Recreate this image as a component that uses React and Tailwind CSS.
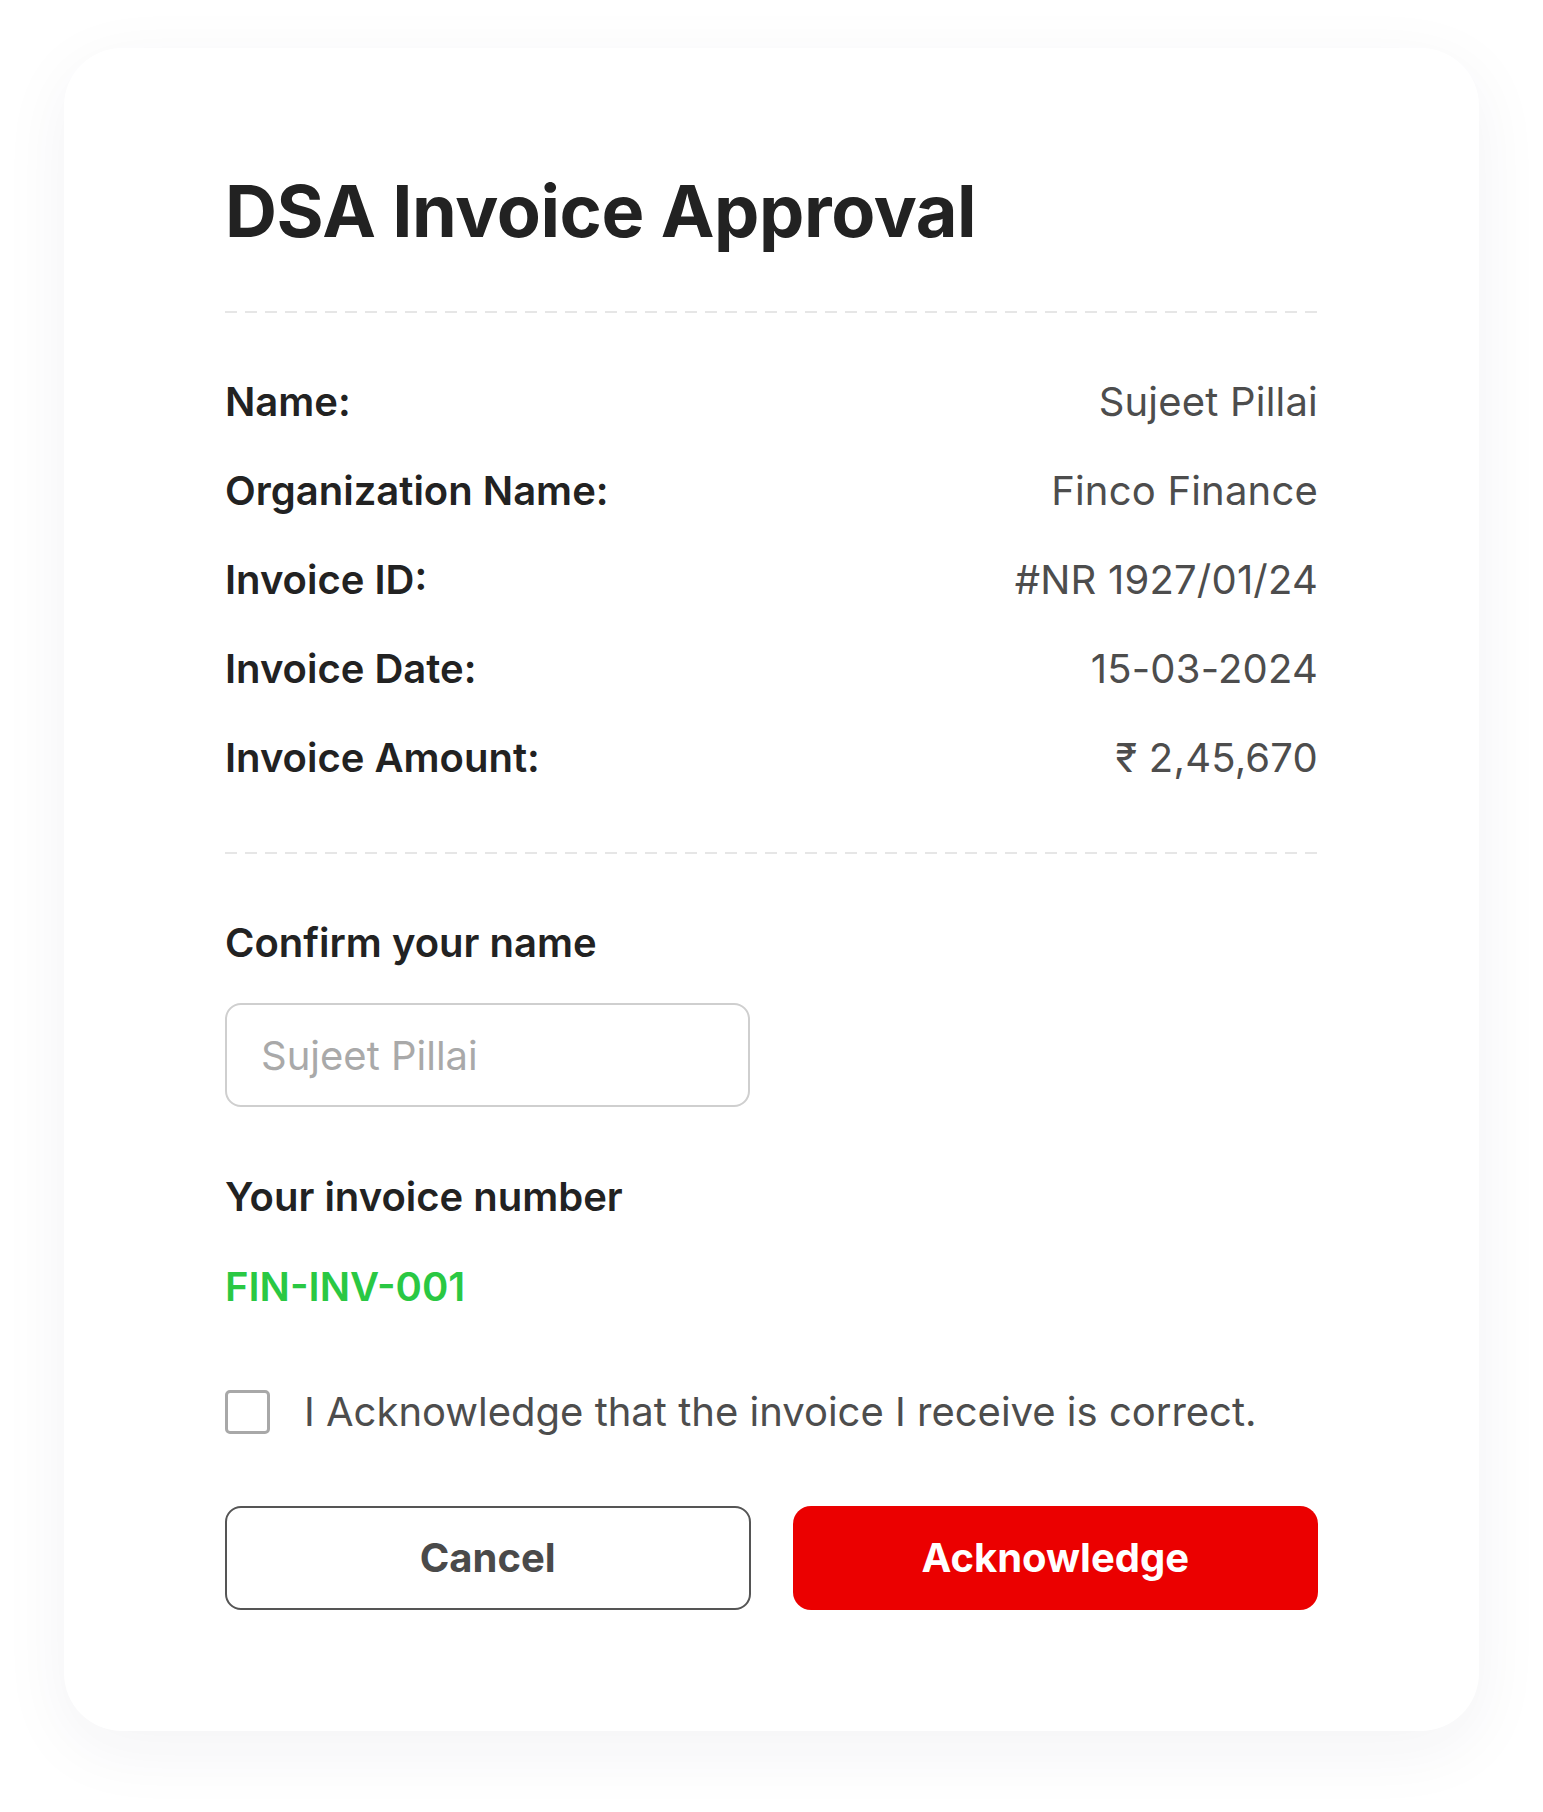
import React from "react";

const rows = [
  ["Name:", "Sujeet Pillai"],
  ["Organization Name:", "Finco Finance"],
  ["Invoice ID:", "#NR 1927/01/24"],
  ["Invoice Date:", "15-03-2024"],
  ["Invoice Amount:", "₹ 2,45,670"],
];

function Dashed({ className = "" }) {
  return (
    <div
      className={
        "h-[2px] w-full bg-[repeating-linear-gradient(to_right,#e6e6e6_0px,#e6e6e6_12px,transparent_12px,transparent_20px)] " +
        className
      }
    />
  );
}

export default function App() {
  return (
    <div className="bg-white px-[64px] pt-[48px] pb-[81px] font-['Inter','Noto_Sans',sans-serif]">
      <div className="rounded-[58px] bg-white px-[161px] pt-[120px] pb-[121px] shadow-[0_18px_70px_rgba(30,30,80,0.055)]">
        <h1 className="text-[72px] leading-[86px] font-bold text-[#222222] tracking-[-0.4px]">
          DSA Invoice Approval
        </h1>
        <Dashed className="mt-[57px]" />
        <div className="mt-[65px] flex flex-col gap-[41px]">
          {rows.map(([k, v]) => (
            <div key={k} className="flex items-center justify-between text-[40px] leading-[48px]">
              <span className="font-semibold text-[#222222]">{k}</span>
              <span className="text-[#4d4d4d] tracking-[0.2px]">{v}</span>
            </div>
          ))}
        </div>
        <Dashed className="mt-[70px]" />
        <div className="mt-[65px] text-[40px] leading-[48px] font-semibold text-[#222222]">
          Confirm your name
        </div>
        <input
          type="text"
          placeholder="Sujeet Pillai"
          className="mt-[36px] block h-[104px] w-[525px] rounded-[16px] border-2 border-[#cfcfcf] bg-white px-[34px] text-[40px] text-[#222222] outline-none placeholder:text-[#a9a9a9]"
        />
        <div className="mt-[66px] text-[40px] leading-[48px] font-semibold text-[#222222]">
          Your invoice number
        </div>
        <div className="mt-[42px] text-[40px] leading-[48px] font-semibold text-[#2ac843]">
          FIN-INV-001
        </div>
        <label className="mt-[77px] flex items-center gap-[34px] text-[40px] leading-[48px] text-[#4d4d4d]">
          <span className="block h-[44px] w-[45px] shrink-0 rounded-[5px] border-[3px] border-[#a8a8a8] bg-white" />
          <span>I Acknowledge that the invoice I receive is correct.</span>
        </label>
        <div className="mt-[70px] grid grid-cols-2 gap-[42px]">
          <button className="h-[104px] rounded-[16px] border-2 border-[#555555] bg-white text-[40px] font-bold text-[#4a4a4a]">
            Cancel
          </button>
          <button className="h-[104px] rounded-[18px] bg-[#eb0000] text-[40px] font-bold text-white">
            Acknowledge
          </button>
        </div>
      </div>
    </div>
  );
}
